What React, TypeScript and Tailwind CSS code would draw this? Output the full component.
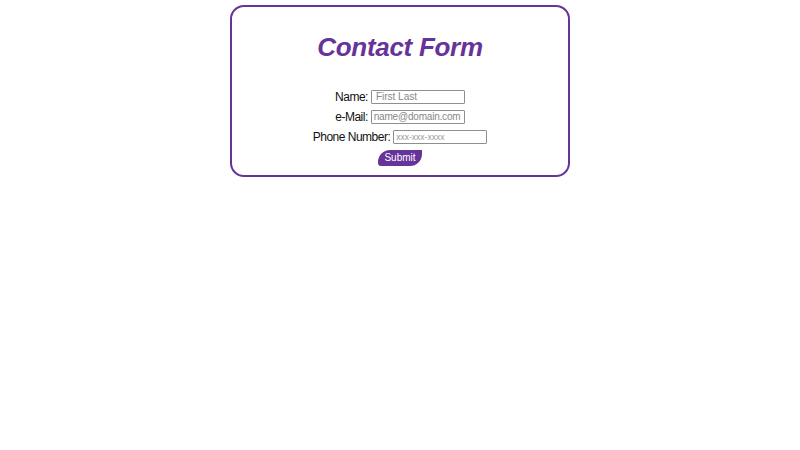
import React from 'react';

const ContactForm: React.FC = () => {
  return (
    <div className="min-h-[450px] bg-white pt-[5px] font-['Liberation_Sans',sans-serif]">
      <div className="mx-auto w-[340px] h-[172px] border-2 border-[#663399] rounded-[14px] flex flex-col items-center">
        <h1 className="mt-[25px] text-[26px] leading-[30px] font-bold italic text-[#663399] tracking-[-0.3px]">
          Contact Form
        </h1>
        <form className="mt-[28px] flex flex-col items-center gap-[6px] text-[12px] leading-[14px] tracking-[-0.5px] text-[#111]">
          <div className="flex items-center gap-[3px]">
            <label>Name:</label>
            <input
              className="w-[94px] h-[14px] border border-[#8f8f8f] rounded-[1px] px-[4px] text-[10px] tracking-normal placeholder:text-[#888]"
              placeholder="First Last"
            />
          </div>
          <div className="flex items-center gap-[3px]">
            <label>e-Mail:</label>
            <input
              className="w-[94px] h-[14px] border border-[#8f8f8f] rounded-[1px] px-[2px] text-[10px] tracking-[-0.2px] placeholder:text-[#888]"
              placeholder="name@domain.com"
            />
          </div>
          <div className="flex items-center gap-[3px]">
            <label>Phone Number:</label>
            <input
              className="w-[94px] h-[14px] border border-[#8f8f8f] rounded-[1px] px-[2px] text-[8.5px] tracking-normal placeholder:text-[#999]"
              placeholder="xxx-xxx-xxxx"
            />
          </div>
          <button
            type="button"
            className="w-[44px] h-[16px] bg-[#663399] text-white text-[10px] leading-[16px] tracking-normal rounded-tl-[12px] rounded-br-[12px] rounded-bl-[3px]"
          >
            Submit
          </button>
        </form>
      </div>
    </div>
  );
};

export default function App() {
  return <ContactForm />;
}
